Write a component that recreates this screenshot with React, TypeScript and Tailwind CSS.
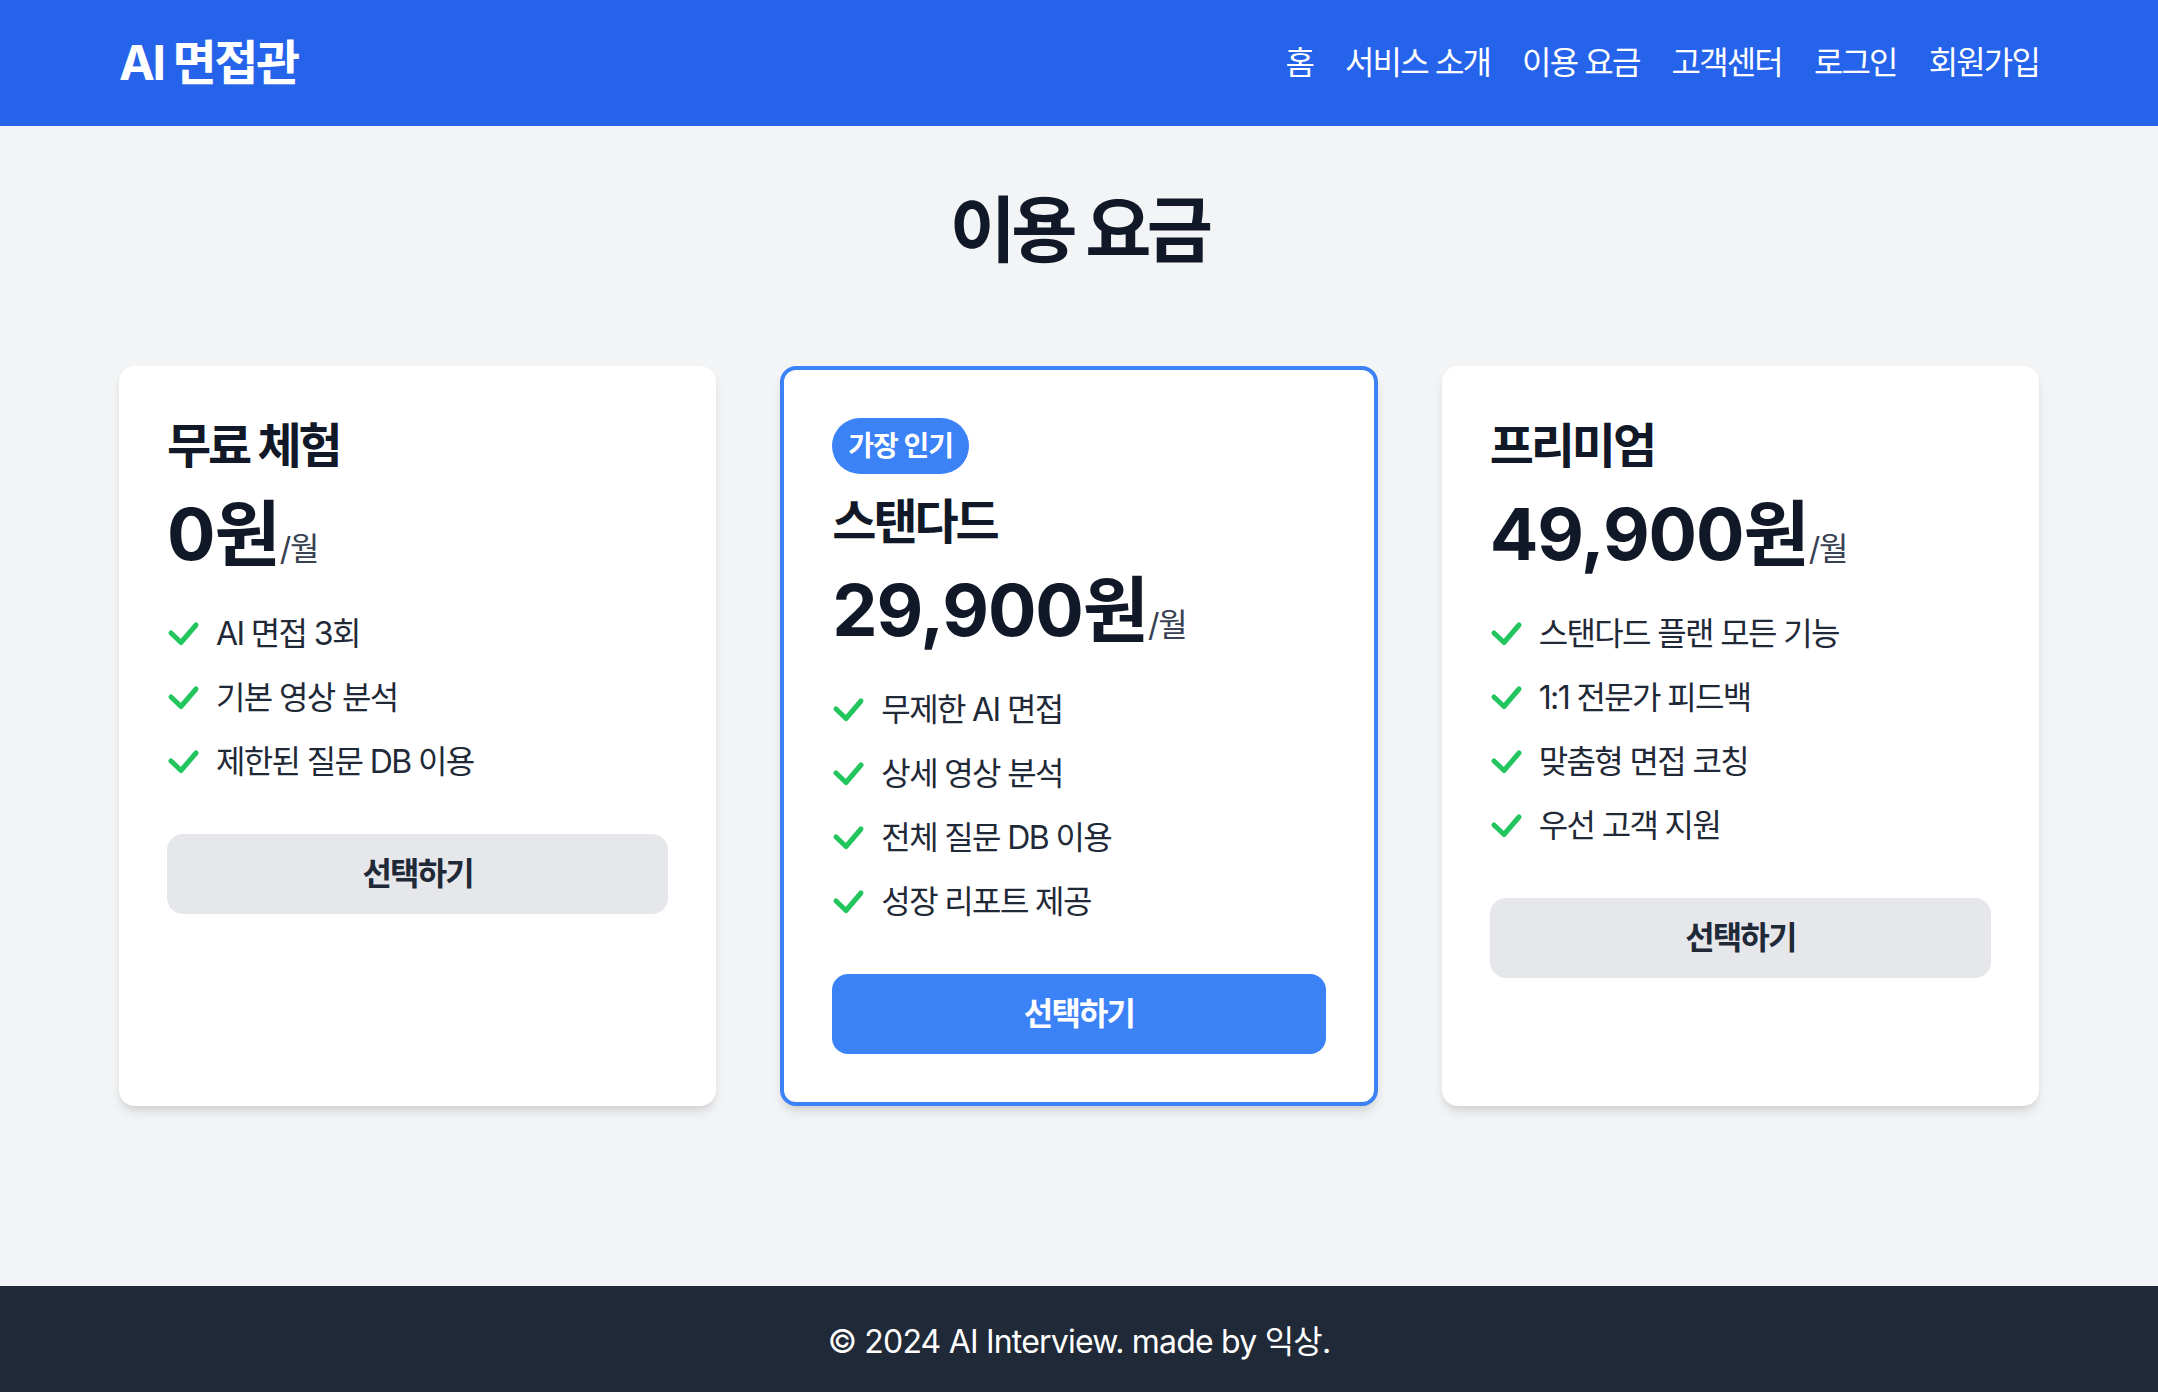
import React from "react";

function Check() {
  return (
    <svg width="34" height="34" viewBox="0 0 34 34" fill="none" className="shrink-0 mr-[15px]">
      <polyline points="4,16 14,25.5 29,8" stroke="#22c55e" strokeWidth="5" strokeLinecap="round" strokeLinejoin="round" />
    </svg>
  );
}

type Plan = {
  name: string;
  price: string;
  features: string[];
  popular?: boolean;
};

const plans: Plan[] = [
  { name: "무료 체험", price: "0원", features: ["AI 면접 3회", "기본 영상 분석", "제한된 질문 DB 이용"] },
  {
    name: "스탠다드",
    price: "29,900원",
    features: ["무제한 AI 면접", "상세 영상 분석", "전체 질문 DB 이용", "성장 리포트 제공"],
    popular: true,
  },
  {
    name: "프리미엄",
    price: "49,900원",
    features: ["스탠다드 플랜 모든 기능", "1:1 전문가 피드백", "맞춤형 면접 코칭", "우선 고객 지원"],
  },
];

function PlanCard({ plan }: { plan: Plan }) {
  return (
    <div
      className={
        plan.popular
          ? "bg-white rounded-[16px] border-4 border-[#3b82f6] p-12 flex flex-col shadow-[0_8px_12px_-2px_rgba(0,0,0,0.1),0_4px_8px_-4px_rgba(0,0,0,0.1)]"
          : "bg-white rounded-[16px] p-12 flex flex-col shadow-[0_8px_12px_-2px_rgba(0,0,0,0.1),0_4px_8px_-4px_rgba(0,0,0,0.1)]"
      }
    >
      {plan.popular && (
        <span className="self-start bg-[#3b82f6] text-white text-[28px] leading-[40px] font-semibold px-[16px] py-[8px] rounded-full mb-[16px] tracking-[-0.04em]">
          가장 인기
        </span>
      )}
      <h2 className="text-[48px] leading-[64px] font-bold text-[#111827] mb-[16px] tracking-[-0.064em]">{plan.name}</h2>
      <div className="flex items-baseline mb-[36px]">
        <span className="text-[72px] leading-[80px] font-bold text-[#111827] tracking-[-0.015em]">{plan.price}</span>
        <span className="text-[32px] leading-[48px] text-[#374151] tracking-[-0.04em]">/월</span>
      </div>
      <ul className="flex flex-col gap-[16px] mb-[48px]">
        {plan.features.map((f) => (
          <li key={f} className="flex items-center text-[32px] leading-[48px] text-[#1f2937] tracking-[-0.051em]">
            <Check />
            <span>{f}</span>
          </li>
        ))}
      </ul>
      <button
        className={
          plan.popular
            ? "w-full rounded-[16px] py-[16px] text-[32px] leading-[48px] font-semibold bg-[#3b82f6] text-white tracking-[-0.058em]"
            : "w-full rounded-[16px] py-[16px] text-[32px] leading-[48px] font-semibold bg-[#e5e7eb] text-[#1f2937] tracking-[-0.058em]"
        }
      >
        선택하기
      </button>
    </div>
  );
}

export default function App() {
  return (
    <div className="min-h-screen flex flex-col bg-[#f3f4f6] font-['Inter','Noto_Sans_CJK_KR',sans-serif]">
      <header className="bg-[#2563eb] text-white h-[126px] flex items-center">
        <div className="w-full max-w-[2048px] mx-auto px-[64px] flex items-center justify-between">
          <div className="text-[48px] leading-[64px] font-bold tracking-[-0.05em]">AI 면접관</div>
          <nav className="flex items-center gap-8 text-[32px] leading-[48px] tracking-[-0.058em]">
            <a>홈</a>
            <a>서비스 소개</a>
            <a>이용 요금</a>
            <a>고객센터</a>
            <a>로그인</a>
            <a>회원가입</a>
          </nav>
        </div>
      </header>
      <main className="flex-1 pt-[64px]">
        <div className="w-full max-w-[2048px] mx-auto px-[64px]">
          <h1 className="text-center text-[72px] leading-[80px] font-bold text-[#111827] mb-[96px] tracking-[-0.065em]">
            이용 요금
          </h1>
          <div className="grid grid-cols-3 gap-[64px]">
            {plans.map((p) => (
              <PlanCard key={p.name} plan={p} />
            ))}
          </div>
        </div>
      </main>
      <footer className="bg-[#1f2937] text-white h-[106px] pt-[32px] text-center text-[32px] leading-[48px] tracking-[-0.025em]">
        © 2024 AI Interview. made by 익상.
      </footer>
    </div>
  );
}
